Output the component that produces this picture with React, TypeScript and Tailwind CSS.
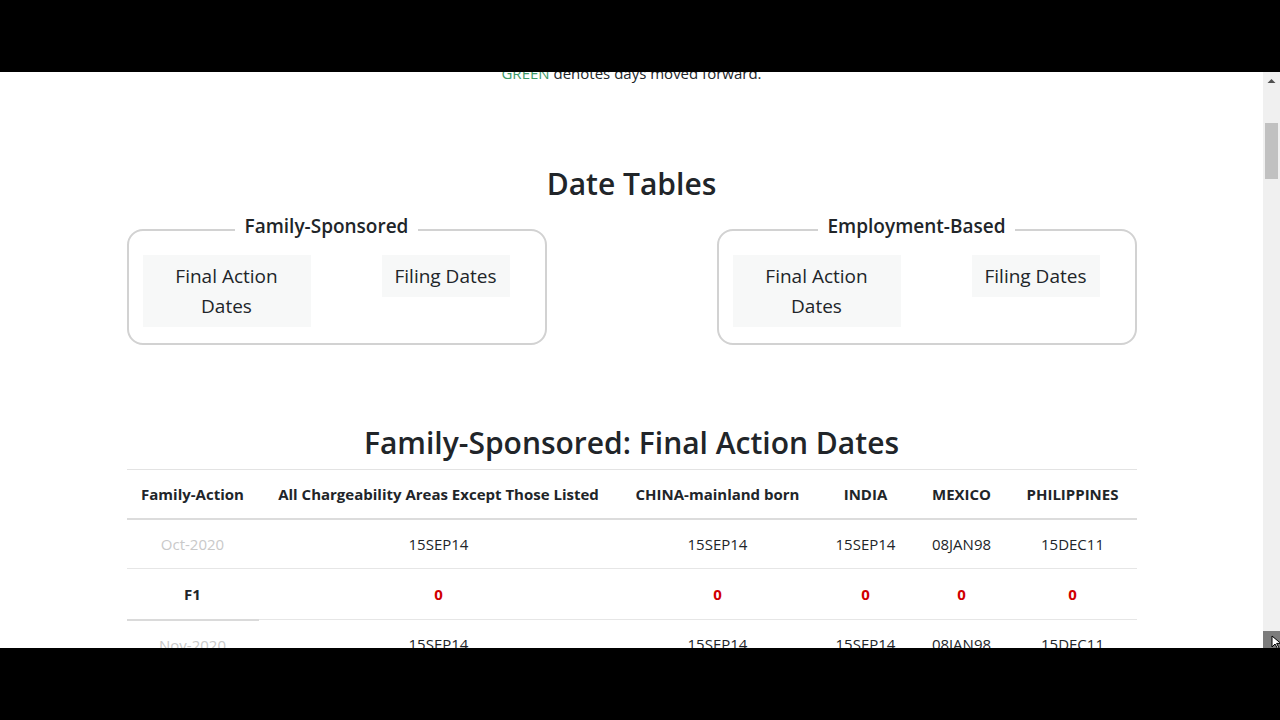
import { FunctionComponent } from "react";

const columns = [
  { label: "Family-Action", width: "w-[132px]" },
  { label: "All Chargeability Areas Except Those Listed", width: "w-[360px]" },
  { label: "CHINA-mainland born", width: "w-[198px]" },
  { label: "INDIA", width: "w-[98px]" },
  { label: "MEXICO", width: "w-[94px]" },
  { label: "PHILIPPINES", width: "w-[128px]" },
];

const rows = [
  { month: "Oct-2020", dates: ["15SEP14", "15SEP14", "15SEP14", "08JAN98", "15DEC11"] },
  { month: "F1", diff: ["0", "0", "0", "0", "0"] },
  { month: "Nov-2020", dates: ["15SEP14", "15SEP14", "15SEP14", "08JAN98", "15DEC11"] },
];

interface GroupBoxProps {
  title: string;
}

const GroupBox: FunctionComponent<GroupBoxProps> = ({ title }: GroupBoxProps) => {
  return (
    <fieldset className="w-[420px] border-2 border-[#d2d2d2] rounded-[16px] pl-[14px] pr-[34px] pt-[6px] pb-[16px]">
      <legend className="mx-auto px-[10px] pb-[8px] text-[19px] leading-[30px] font-semibold text-[#212529]">
        {title}
      </legend>
      <div className="flex items-start">
        <button className="w-[168px] bg-[#f7f8f8] px-[24px] py-[6px] text-[19px] leading-[30px] text-[#212529] text-center">
          Final Action Dates
        </button>
        <button className="w-[128px] ml-[71px] bg-[#f7f8f8] py-[6px] text-[19px] leading-[30px] text-[#212529] text-center whitespace-nowrap">
          Filing Dates
        </button>
      </div>
    </fieldset>
  );
};

const Scrollbar = () => {
  return (
    <div className="w-[17px] h-full bg-[#f0f0f0] flex flex-col relative">
      <div className="h-[17px] flex items-center justify-center">
        <svg width="9" height="6" viewBox="0 0 9 6">
          <path d="M0.5 5 L4.5 1 L8.5 5 Z" fill="#505050" />
        </svg>
      </div>
      <div className="mt-[34px] mx-[2px] h-[56px] bg-[#c1c1c1]" />
      <div className="flex-1" />
      <div className="h-[17px] bg-[#7c7c7c]" />
      <svg
        className="absolute left-[8px] top-[563px]"
        width="12"
        height="14"
        viewBox="0 0 12 14"
      >
        <path d="M1 1 L1 12 L4 9 L6.5 13.5 L8 12.8 L5.6 8.4 L9.8 8.4 Z" fill="#ffffff" stroke="#000000" strokeWidth="1" />
      </svg>
    </div>
  );
};

const App = () => {
  return (
    <div
      className="w-[1280px] h-[720px] bg-black flex flex-col overflow-hidden"
      style={{ fontFamily: '"Open Sans", "Noto Sans", sans-serif' }}
    >
      <div className="h-[72px] shrink-0" />
      <div className="h-[576px] shrink-0 bg-white flex overflow-hidden">
        <div className="flex-1 overflow-hidden">
          <div className="w-[1010px] mx-auto">
            <p className="mt-[-11px] text-[15px] leading-[24px] text-center text-[#212529]">
              <span className="text-[#3d9a68]">GREEN</span> denotes days moved forward.
            </p>

            <h2 className="mt-[80px] text-[30px] leading-[38px] font-semibold text-center text-[#212529]">
              Date Tables
            </h2>

            <div className="mt-[8px] flex justify-between">
              <GroupBox title="Family-Sponsored" />
              <GroupBox title="Employment-Based" />
            </div>

            <h2 className="mt-[79px] text-[30px] leading-[38px] font-semibold text-center text-[#212529]">
              Family-Sponsored: Final Action Dates
            </h2>

            <table className="mt-[7px] w-full table-fixed border-collapse text-[15px] text-[#212529]">
              <thead>
                <tr className="border-t border-[#e3e3e3] border-b-2 border-b-[#dcdcdc]">
                  {columns.map((col) => (
                    <th key={col.label} className={`${col.width} h-[49px] px-1 font-bold text-center whitespace-nowrap`}>
                      {col.label}
                    </th>
                  ))}
                </tr>
              </thead>
              <tbody>
                {rows.map((row) =>
                  row.dates ? (
                    <tr key={row.month} className="border-b border-[#e6e6e6]">
                      <td className="h-[50px] text-center text-[#c9c9c9]">{row.month}</td>
                      {row.dates.map((d, i) => (
                        <td key={i} className="h-[50px] text-center">
                          {d}
                        </td>
                      ))}
                    </tr>
                  ) : (
                    <tr key={row.month}>
                      <td className="h-[51px] text-center font-bold border-b-2 border-[#dadada]">{row.month}</td>
                      {row.diff?.map((d, i) => (
                        <td key={i} className="h-[51px] text-center font-bold text-[#d10000] border-b border-[#e6e6e6]">
                          {d}
                        </td>
                      ))}
                    </tr>
                  )
                )}
              </tbody>
            </table>
          </div>
        </div>
        <Scrollbar />
      </div>
      <div className="h-[72px] shrink-0" />
    </div>
  );
};

export default App;
